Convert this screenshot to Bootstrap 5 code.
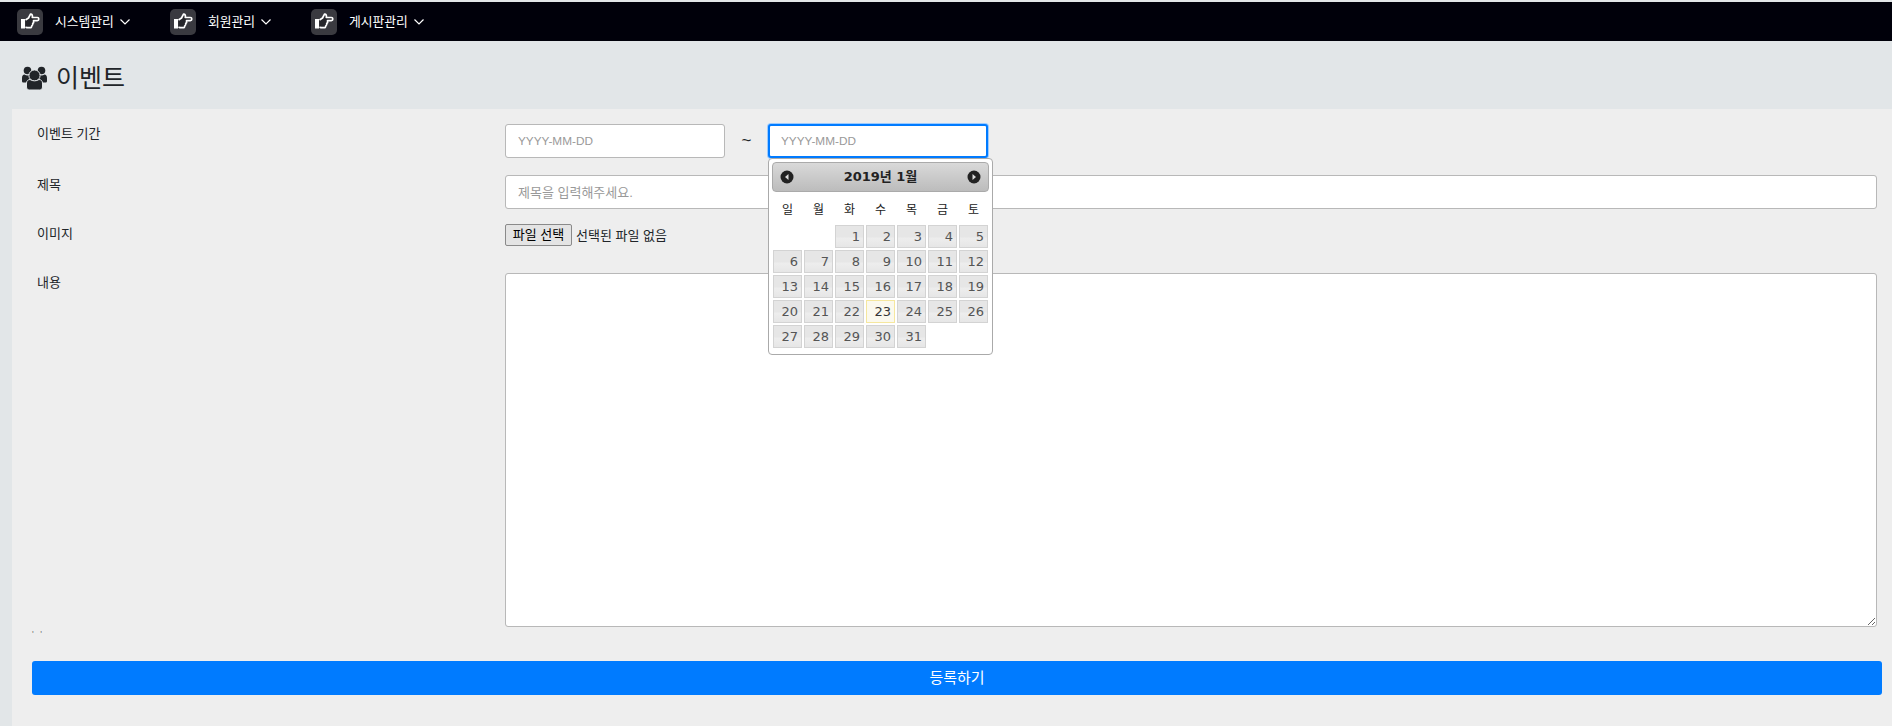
<!DOCTYPE html>
<html lang="ko">
<head>
    <meta charset="UTF-8">
    <meta name="viewport" content="width=device-width, initial-scale=1.0">
    <title>이벤트</title>
    <link href="https://cdn.jsdelivr.net/npm/bootstrap@5.3.0/dist/css/bootstrap.min.css" rel="stylesheet">
    <style>
        body { background: #e2e6e8; font-family: "Liberation Sans", "Noto Sans CJK KR", sans-serif; font-size: 13px; color: #212529; min-height: 726px; padding-top: 2px; }
        .top-nav { background: #00000a; height: 39px; padding-left: 17px; gap: 40px; }
        .top-item { color: #fff; font-size: 12.8px; text-decoration: none; }
        .top-item:hover { color: #fff; }
        .hand-box { width: 26px; height: 26px; background: #3a3a40; border-radius: 5px; margin-right: 12px; }
        .top-item .chev { margin-left: 6px; }
        .page-head { height: 68px; padding-left: 22px; padding-top: 5px; }
        .page-head h1 { font-size: 25px; font-weight: 400; margin: 0 0 0 9px; }
        .form-area { background: #eee; margin-left: 12px; padding: 15px 10px 30px 20px; height: 617px; }
        .form-line { margin-bottom: 17px; padding-right: 5px; }
        .form-lbl { width: 473px; padding-left: 5px; flex-shrink: 0; line-height: 20px; }
        .ev-input { height: 34px; font-size: 13px; border-radius: 3px; border-color: #b8b8b8; padding: 0 11px 0 12px; }
        .ev-input::placeholder { color: #999; }
        .date-wrap { width: 220px; }
        .date-wrap .ev-input { width: 220px; }
        .date-input { font-size: 11.8px; }
        .date-on, .date-on:focus { border: 2px solid #007bff; box-shadow: 0 0 0 1px #9ccbff; padding: 0 10px 0 11px; }
        .tilde { width: 43px; height: 34px; text-align: center; font-size: 17px; line-height: 34px; }
        .title-line { margin-bottom: 15px; }
        .file-btn { height: 22px; width: 67px; font-size: 13px; padding: 0; background: #e4e4e4; border: 1px solid #8a8a8a; border-radius: 2px; color: #000; }
        .file-txt { margin-left: 4px; padding-top: 2px; }
        .file-line { margin-bottom: 27px; }
        .body-area { height: 354px; resize: both; margin: 0; }
        .stray { height: 34px; padding-top: 3px; font-size: 9px; line-height: 8px; color: #777; letter-spacing: 2px; }
        .submit-btn { height: 34px; background: #007bff; border: 0; border-radius: 3px; color: #fff; font-size: 15px; }
        .cal-pop { position: absolute; top: 34px; left: 0; width: 225px; height: 197px; background: #fff; border: 1px solid #aaa; border-radius: 4px; padding: 3px; z-index: 5; font-family: "DejaVu Sans", "Noto Sans CJK KR", sans-serif; }
        .cal-head { height: 30px; background: linear-gradient(#d9d9d9, #bcbcbc); border: 1px solid #aaa; border-radius: 4px; padding: 0 7px; font-weight: 700; font-size: 13px; color: #222; }
        .cal-days, .cal-grid { display: grid; grid-template-columns: repeat(7, 29px); column-gap: 2px; margin-left: 1px; }
        .cal-days { height: 33px; padding-top: 3px; align-items: center; text-align: center; font-size: 12px; color: #222; }
        .cal-grid { row-gap: 2px; }
        .cal-day { height: 23px; line-height: 21px; text-align: right; padding-right: 3px; font-size: 13px; color: #555; border: 1px solid #d3d3d3; background: linear-gradient(#e6e6e6 50%, #ededed 60%, #e6e6e6); }
        .cal-today { background: #fbf9ee; border-color: #f5e79e; color: #363636; }
    </style>
</head>
<body>
    <!-- top menu -->
    <nav class="top-nav d-flex align-items-center">
        <a href="#" class="top-item d-flex align-items-center">
            <span class="hand-box d-flex align-items-center justify-content-center">
                <svg width="20" height="17" viewBox="0 0 20 17"><rect x="1" y="6" width="4" height="9.500" fill="#fff"/><path d="M5.500 7 8.500 5 10.500 1.200c1.500-.2 2.300 1.300 1.800 3.300h5c2 0 2 3.200 0 3.200h-3.800c.4 1.200 0 2.300-.8 2.800.2 1-.2 2-1 2.400.1 1-.5 1.800-1.500 1.800H7L5.500 14" fill="#26262b" stroke="#fff" stroke-width="1.700" stroke-linejoin="round"/></svg>
            </span>
            시스템관리
            <svg class="chev" width="10" height="6" viewBox="0 0 10 6"><path d="M.5.5 5 5 9.500.5" fill="none" stroke="#fff" stroke-width="1.200"/></svg>
        </a>
        <a href="#" class="top-item d-flex align-items-center">
            <span class="hand-box d-flex align-items-center justify-content-center">
                <svg width="20" height="17" viewBox="0 0 20 17"><rect x="1" y="6" width="4" height="9.500" fill="#fff"/><path d="M5.500 7 8.500 5 10.500 1.200c1.500-.2 2.300 1.300 1.800 3.300h5c2 0 2 3.200 0 3.200h-3.800c.4 1.200 0 2.300-.8 2.800.2 1-.2 2-1 2.400.1 1-.5 1.800-1.500 1.800H7L5.500 14" fill="#26262b" stroke="#fff" stroke-width="1.700" stroke-linejoin="round"/></svg>
            </span>
            회원관리
            <svg class="chev" width="10" height="6" viewBox="0 0 10 6"><path d="M.5.5 5 5 9.500.5" fill="none" stroke="#fff" stroke-width="1.200"/></svg>
        </a>
        <a href="#" class="top-item d-flex align-items-center">
            <span class="hand-box d-flex align-items-center justify-content-center">
                <svg width="20" height="17" viewBox="0 0 20 17"><rect x="1" y="6" width="4" height="9.500" fill="#fff"/><path d="M5.500 7 8.500 5 10.500 1.200c1.500-.2 2.300 1.300 1.800 3.300h5c2 0 2 3.200 0 3.200h-3.800c.4 1.200 0 2.300-.8 2.800.2 1-.2 2-1 2.400.1 1-.5 1.800-1.500 1.800H7L5.500 14" fill="#26262b" stroke="#fff" stroke-width="1.700" stroke-linejoin="round"/></svg>
            </span>
            게시판관리
            <svg class="chev" width="10" height="6" viewBox="0 0 10 6"><path d="M.5.5 5 5 9.500.5" fill="none" stroke="#fff" stroke-width="1.200"/></svg>
        </a>
    </nav>

    <div class="page-head d-flex align-items-center">
        <svg width="25" height="24" viewBox="0 0 25 24" fill="#212529"><circle cx="5.500" cy="4.500" r="3.800"/><circle cx="19.500" cy="4.500" r="3.800"/><path d="M0 12c0-2 1-3.500 2.500-3.500 1.800 1.200 4.200 1.200 6 0l8 0c1.800 1.200 4.200 1.200 6 0C24 8.500 25 10 25 12v3c0 1-.7 1.500-1.500 1.500h-22C.7 16.500 0 16 0 15z"/><circle cx="12.500" cy="9.500" r="5.600" stroke="#e2e6e8"/><path d="M4.500 17c0-2 1.500-3.500 3.500-3.500 2.700 1.800 6.300 1.800 9 0 2 0 3.500 1.500 3.500 3.500v4c0 2-1.500 3-3 3H7.500c-1.500 0-3-1-3-3z" stroke="#e2e6e8"/></svg>
        <h1>이벤트</h1>
    </div>

    <form class="form-area">
        <div class="form-line d-flex">
            <label class="form-lbl">이벤트 기간</label>
            <input type="text" class="form-control ev-input date-input date-wrap" placeholder="YYYY-MM-DD">
            <span class="tilde">~</span>
            <div class="date-wrap position-relative">
                <input type="text" class="form-control ev-input date-input date-on" placeholder="YYYY-MM-DD">
                <div class="cal-pop">
                    <div class="cal-head d-flex align-items-center justify-content-between">
                        <svg width="14" height="14" viewBox="0 0 14 14"><circle cx="7" cy="7" r="6.500" fill="#222"/><path d="M8.500 4v6L5 7z" fill="#ddd"/></svg>
                        <span>2019년 1월</span>
                        <svg width="14" height="14" viewBox="0 0 14 14"><circle cx="7" cy="7" r="6.500" fill="#222"/><path d="M5.500 4v6L9 7z" fill="#ddd"/></svg>
                    </div>
                    <div class="cal-days"><span>일</span><span>월</span><span>화</span><span>수</span><span>목</span><span>금</span><span>토</span></div>
                    <div class="cal-grid" id="calGrid"></div>
                </div>
            </div>
        </div>
        <div class="form-line title-line d-flex">
            <label class="form-lbl">제목</label>
            <input type="text" class="form-control ev-input" placeholder="제목을 입력해주세요.">
        </div>
        <div class="form-line file-line d-flex">
            <label class="form-lbl">이미지</label>
            <button type="button" class="file-btn">파일 선택</button>
            <span class="file-txt align-self-center">선택된 파일 없음</span>
        </div>
        <div class="form-line d-flex mb-0">
            <label class="form-lbl">내용</label>
            <textarea class="form-control ev-input body-area"></textarea>
        </div>
        <div class="stray">' '</div>
        <button type="button" class="submit-btn w-100">등록하기</button>
    </form>

    <script src="https://cdn.jsdelivr.net/npm/bootstrap@5.3.0/dist/js/bootstrap.bundle.min.js"></script>
    <script>
        // January 2019 starts on a Tuesday
        const calGrid = document.getElementById('calGrid');
        for (let i = 0; i < 2; i++) calGrid.appendChild(document.createElement('span'));
        for (let d = 1; d <= 31; d++) {
            const cell = document.createElement('span');
            cell.className = d === 23 ? 'cal-day cal-today' : 'cal-day';
            cell.textContent = d;
            calGrid.appendChild(cell);
        }
    </script>
</body>
</html>
